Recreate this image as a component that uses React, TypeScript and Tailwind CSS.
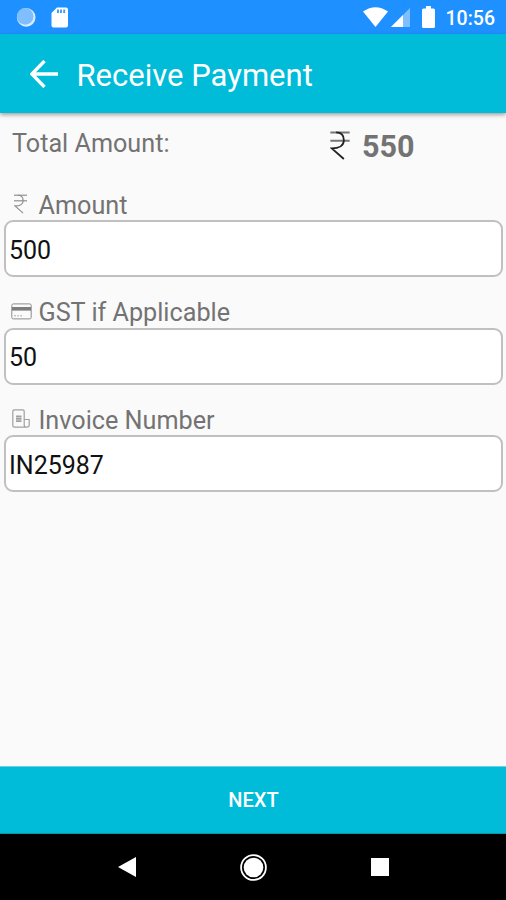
import { useState } from 'react';
import type { ReactNode } from 'react';

function RupeeIcon({ className, dark }: { className: string; dark?: boolean }) {
  return (
    <svg className={className} viewBox="0 0 20 30" fill="none">
      <path d="M0 1.5H20M0 10H20" stroke={dark ? '#777777' : '#a5a5a5'} strokeWidth={dark ? 2 : 2.2} />
      <path
        d="M6 1.5C12 1.5 14 5 14 9.5C14 15 9 18 1.5 18L14 29"
        stroke={dark ? '#222222' : '#8f8f8f'}
        strokeWidth={dark ? 1.9 : 1.8}
      />
    </svg>
  );
}

function CardIcon() {
  return (
    <svg className="h-[17px] w-[21px]" viewBox="0 0 21 17" fill="none">
      <rect x="0.8" y="0.9" width="19.4" height="15" rx="1.5" stroke="#8c8c8c" />
      <path d="M1 5.8H20" stroke="#7d7d7d" strokeWidth="3.6" />
      <path d="M3 12.8H5M6.2 12.8H8M9.2 12.8H11" stroke="#aaaaaa" />
    </svg>
  );
}

function InvoiceIcon() {
  return (
    <svg className="ml-px h-[20px] w-[18px]" viewBox="0 0 18 20" fill="none" stroke="#a0a0a0">
      <path d="M12.2 16V2.5Q12.2 0.8 10.5 0.8H2.5Q0.8 0.8 0.8 2.5V16.5Q0.8 18.2 2.5 18.2H15Q17.2 18.2 17.2 16V10.5H12.2V16Q12.2 18.2 14.4 18.2" strokeWidth="1.2" />
      <path d="M4 7.5H9.5M4 9.8H9.5M4 12.1H9.5" strokeWidth="1.8" />
    </svg>
  );
}

type FieldProps = {
  icon: ReactNode;
  label: string;
  initial: string;
};

function Field({ icon, label, initial }: FieldProps) {
  const [value, setValue] = useState(initial);

  return (
    <label className="flex h-[107.5px] flex-col">
      <span className="flex h-[30px] items-center pt-px pl-[7px] text-[25.2px] text-[#737373]">
        <span className="flex w-[27.5px] items-center pb-[4px]">{icon}</span>
        {label}
      </span>
      <input
        className="h-[57px] w-full rounded-[9px] border-2 border-[#c0c0c0] bg-white px-[3px] pt-[3px] text-[25px] text-[#111111] outline-none"
        value={value}
        onChange={(e) => setValue(e.target.value)}
      />
    </label>
  );
}

export default function App() {
  return (
    <main className="flex h-[900px] w-[506px] flex-col bg-[#fafafa] font-['Roboto',sans-serif]">
      {/* Status bar */}
      <div className="flex h-[34px] shrink-0 items-center justify-between bg-[#1e90ff] pr-[11px] pl-4 text-white">
        <div className="flex items-center gap-[15px]">
          <svg className="h-5 w-5" viewBox="0 0 20 20">
            <circle cx="10.2" cy="10.4" r="9.3" fill="#d9ecff" />
            <circle cx="9.2" cy="9.4" r="8.3" fill="#80bfff" />
          </svg>
          <svg className="h-[21px] w-[17px]" viewBox="0 0 17 21">
            <path d="M6 0.5H15Q17 0.5 17 2.5V18.5Q17 20.5 15 20.5H2.5Q0.5 20.5 0.5 18.5V6Z" fill="#ffffff" />
            <path d="M7 2.5V6M10 2.5V6M13.2 2.5V6" stroke="#3d9fff" strokeWidth="1.9" />
          </svg>
        </div>
        <div className="flex items-center">
          <svg className="h-5 w-[25px]" viewBox="0 0 25 20">
            <path d="M0 4.5Q12.5 -4 25 4.5L12.5 20Z" fill="#ffffff" />
          </svg>
          <svg className="ml-[3px] h-[19px] w-[19px]" viewBox="0 0 19 19">
            <path d="M19 0V19H0Z" fill="#7fbfff" />
            <path d="M12 7V19H0Z" fill="#ffffff" />
          </svg>
          <svg className="ml-3 h-[22px] w-[13px]" viewBox="0 0 13 22">
            <path d="M4 0H9V2.5H11.5Q13 2.5 13 4V20.5Q13 22 11.5 22H1.5Q0 22 0 20.5V4Q0 2.5 1.5 2.5H4Z" fill="#ffffff" />
          </svg>
          <span className="ml-[11px] pt-[3px] text-[19.5px] leading-none font-medium">10:56</span>
        </div>
      </div>

      {/* Toolbar */}
      <header className="z-10 flex h-[79px] shrink-0 items-center bg-[#00bcd8] pl-[30px] text-white shadow-[0_2px_4px_rgba(0,0,0,0.35)]">
        <svg className="h-7 w-7" viewBox="0 0 28 28" fill="none">
          <path d="M14.5 1L1.8 14L14.5 27M2 14H28" stroke="#ffffff" strokeWidth="3.4" />
        </svg>
        <h1 className="ml-[18.5px] pt-[3px] text-[31px] leading-none">Receive Payment</h1>
      </header>

      <section className="flex grow flex-col pr-[3px] pl-1">
        <div className="flex h-[77px] pl-2 text-[#737373]">
          <p className="w-[318px] pt-4 text-[25.2px] leading-[30px]">Total Amount:</p>
          <div className="flex h-[66px] items-center">
            <RupeeIcon className="mb-[2px] h-[29px] w-5" dark />
            <span className="ml-3 pt-[2px] text-[30.5px] font-bold">550</span>
          </div>
        </div>
        <Field icon={<RupeeIcon className="ml-[3px] h-5 w-[13px]" />} label="Amount" initial="500" />
        <Field icon={<CardIcon />} label="GST if Applicable" initial="50" />
        <Field icon={<InvoiceIcon />} label="Invoice Number" initial="IN25987" />
      </section>

      <button className="h-[68px] shrink-0 border-y border-t-[#63d4e5] border-b-[#0798aa] bg-[#00bcd8] pl-px text-[20px] font-medium text-white">
        NEXT
      </button>

      {/* Android navigation */}
      <nav className="flex h-[66px] shrink-0 items-center justify-between bg-black pr-[117px] pl-[118px]">
        <svg className="h-[20px] w-[18px]" viewBox="0 0 18 20">
          <path d="M0 10L18 0V20Z" fill="#ffffff" />
        </svg>
        <svg className="h-[27px] w-[27px]" viewBox="0 0 27 27">
          <circle cx="13.5" cy="13.5" r="12.4" fill="none" stroke="#ffffff" strokeWidth="1.8" />
          <circle cx="13.5" cy="13.5" r="9.8" fill="#ffffff" />
        </svg>
        <div className="h-[18px] w-[18px] bg-white" />
      </nav>
    </main>
  );
}
